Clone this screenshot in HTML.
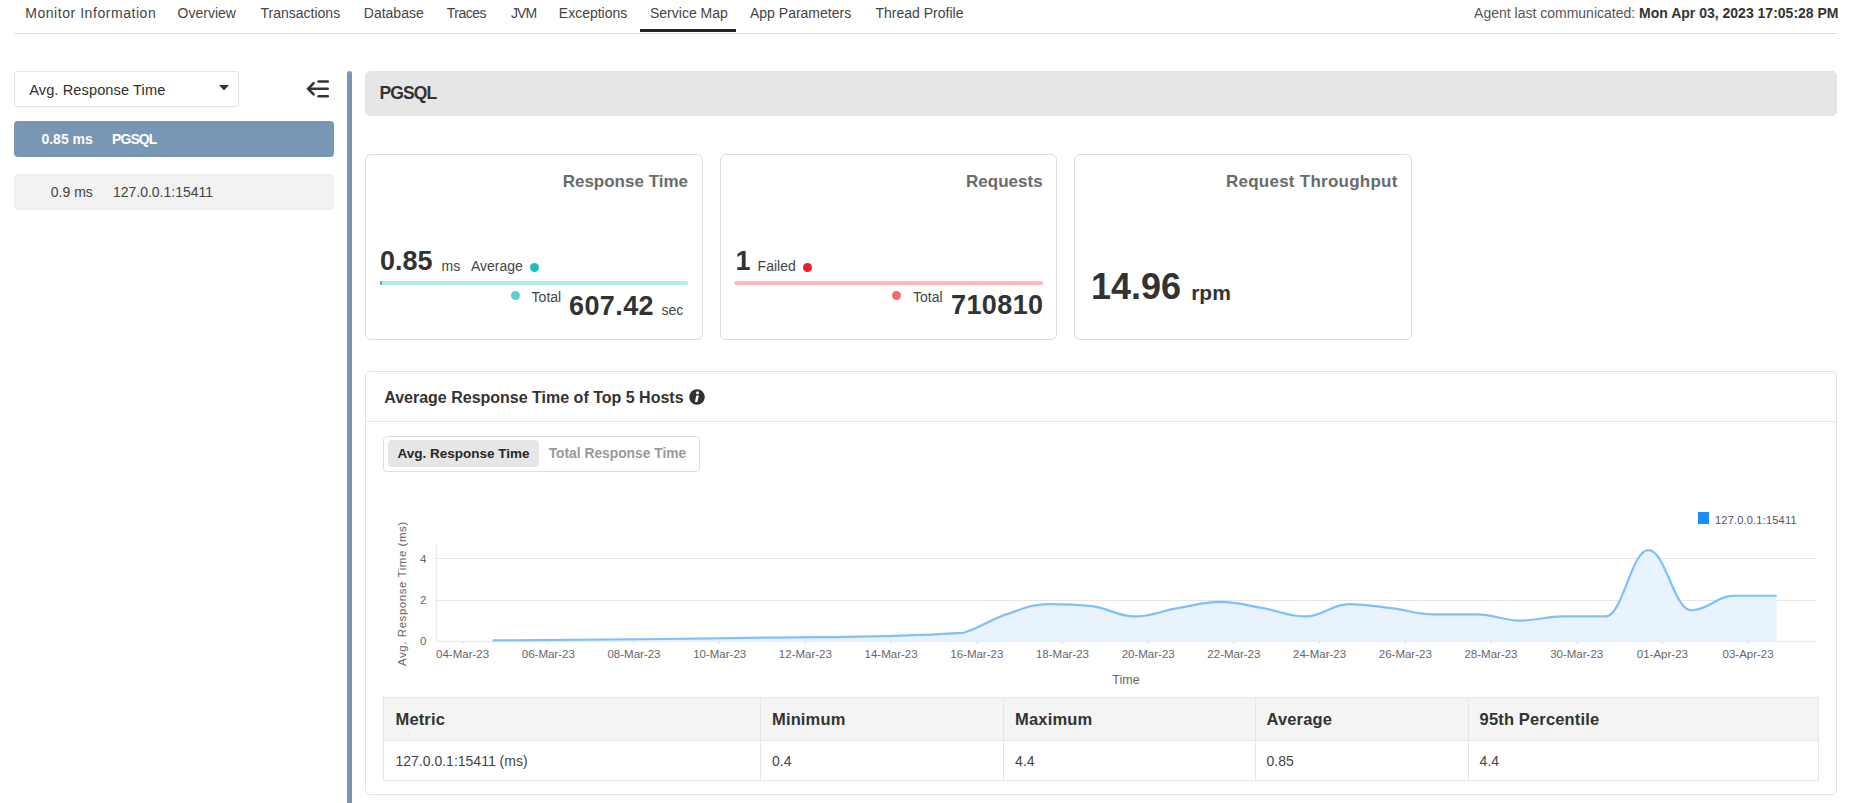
<!DOCTYPE html>
<html><head><meta charset="utf-8"><title>Service Map</title>
<style>
html,body{margin:0;padding:0;width:1852px;height:803px;overflow:hidden;background:#fff;position:relative}
body{font-family:"Liberation Sans",sans-serif}
.t{position:absolute;white-space:nowrap;line-height:1;font-family:"Liberation Sans",sans-serif}
.box{position:absolute;box-sizing:content-box}
svg text{font-family:"Liberation Sans",sans-serif}
</style></head><body>
<div class="t" style="left:25.2px;top:6.15px;font-size:14px;color:#444;letter-spacing:0.55px;">Monitor Information</div>
<div class="t" style="left:177.6px;top:6.15px;font-size:14px;color:#444;">Overview</div>
<div class="t" style="left:260.5px;top:6.15px;font-size:14px;color:#444;">Transactions</div>
<div class="t" style="left:363.8px;top:6.15px;font-size:14px;color:#444;">Database</div>
<div class="t" style="left:446.7px;top:6.15px;font-size:14px;color:#444;letter-spacing:-0.5px;">Traces</div>
<div class="t" style="left:511px;top:6.15px;font-size:14px;color:#444;letter-spacing:-0.9px;">JVM</div>
<div class="t" style="left:558.8px;top:6.15px;font-size:14px;color:#444;">Exceptions</div>
<div class="t" style="left:650px;top:6.15px;font-size:14px;color:#444;">Service Map</div>
<div class="t" style="left:750px;top:6.15px;font-size:14px;color:#444;">App Parameters</div>
<div class="t" style="left:875.5px;top:6.15px;font-size:14px;color:#444;">Thread Profile</div>
<div class="box" style="left:14px;top:33px;width:1823px;height:1px;background:#dedede"></div>
<div class="box" style="left:640px;top:29px;width:96px;height:3px;background:#222"></div>
<div class="t" style="right:13.5px;top:6.45px;font-size:14px;color:#555;">Agent last communicated: <b style="color:#333">Mon Apr 03, 2023 17:05:28 PM</b></div>
<div class="box" style="left:14px;top:71px;width:223px;height:34px;border:1px solid #e3e3e3;border-radius:3px;background:#fff"></div>
<div class="t" style="left:29.2px;top:82.84px;font-size:14.6px;color:#2e2e2e;letter-spacing:0.1px;">Avg. Response Time</div>
<svg class="box" style="left:219px;top:84.8px" width="11" height="7"><path d="M0 0 L10 0 L5 5.6 Z" fill="#333"/></svg>
<svg class="box" style="left:304px;top:78px" width="28" height="22"><g stroke="#333" stroke-width="2.6" stroke-linecap="round" fill="none"><path d="M14.6 3.5 H23.7"/><path d="M4.5 10.8 H23.7"/><path d="M9.6 5.2 L4.2 10.8 L9.6 16.4"/><path d="M14.6 18.3 H23.7"/></g></svg>
<div class="box" style="left:14px;top:121px;width:320px;height:36px;background:#7897b5;border-radius:4px"></div>
<div class="t" style="right:1759.2px;top:131.95px;font-size:14px;font-weight:700;color:#fff;">0.85 ms</div>
<div class="t" style="left:112px;top:131.95px;font-size:14px;font-weight:700;color:#fff;letter-spacing:-0.9px;">PGSQL</div>
<div class="box" style="left:14px;top:174px;width:320px;height:36px;background:#f2f2f2;border-radius:4px"></div>
<div class="t" style="right:1759.2px;top:184.85px;font-size:14px;color:#444;">0.9 ms</div>
<div class="t" style="left:112.9px;top:184.85px;font-size:14px;color:#444;">127.0.0.1:15411</div>
<div class="box" style="left:347px;top:71px;width:5px;height:740px;background:#7897b5;border-radius:3px"></div>
<div class="box" style="left:365px;top:71px;width:1470px;height:43px;background:#e6e6e6;border:1px solid #e2e2e2;border-radius:5px"></div>
<div class="t" style="left:379.5px;top:85.39px;font-size:17.5px;font-weight:700;color:#333;letter-spacing:-0.9px;">PGSQL</div>
<div class="box" style="left:365px;top:154px;width:336px;height:184px;border:1px solid #dcdcdc;border-radius:6px"></div>
<div class="box" style="left:720px;top:154px;width:335px;height:184px;border:1px solid #dcdcdc;border-radius:6px"></div>
<div class="box" style="left:1074px;top:154px;width:336px;height:184px;border:1px solid #dcdcdc;border-radius:6px"></div>
<div class="t" style="right:1164px;top:172.61px;font-size:17px;font-weight:700;color:#6b6b6b;">Response Time</div>
<div class="t" style="right:809.4000000000001px;top:172.61px;font-size:17px;font-weight:700;color:#6b6b6b;">Requests</div>
<div class="t" style="right:454.4000000000001px;top:172.61px;font-size:17px;font-weight:700;color:#6b6b6b;letter-spacing:0.25px;">Request Throughput</div>
<div class="t" style="left:380px;top:248.44px;font-size:27px;font-weight:700;color:#333;">0.85</div>
<div class="t" style="left:441.6px;top:259.25px;font-size:14px;color:#444;">ms</div>
<div class="t" style="left:470.9px;top:259.25px;font-size:14px;color:#444;">Average</div>
<div class="box" style="left:530px;top:263px;width:9px;height:9px;border-radius:50%;background:#17bfc1"></div>
<div class="box" style="left:380px;top:281px;width:308px;height:4px;border-radius:2px;background:#b3ebeb"></div>
<div class="box" style="left:380px;top:281px;width:1.5px;height:4px;border-radius:1px;background:#17bfc1"></div>
<div class="box" style="left:511px;top:291px;width:9px;height:9px;border-radius:50%;background:#5bcfd5"></div>
<div class="t" style="left:531.6px;top:290.05px;font-size:14px;color:#444;">Total</div>
<div class="t" style="left:569px;top:292.64px;font-size:27px;font-weight:700;color:#333;letter-spacing:0.4px;">607.42</div>
<div class="t" style="left:661.5px;top:302.85px;font-size:14px;color:#444;">sec</div>
<div class="t" style="left:735.5px;top:248.44px;font-size:27px;font-weight:700;color:#333;">1</div>
<div class="t" style="left:757.6px;top:259.25px;font-size:14px;color:#444;">Failed</div>
<div class="box" style="left:802.8px;top:262.6px;width:9px;height:9px;border-radius:50%;background:#ee1d27"></div>
<div class="box" style="left:734px;top:281px;width:309px;height:4px;border-radius:2px;background:#ffb8bc"></div>
<div class="box" style="left:892px;top:291.2px;width:9px;height:9px;border-radius:50%;background:#f26b73"></div>
<div class="t" style="left:913px;top:289.65px;font-size:14px;color:#444;">Total</div>
<div class="t" style="right:808.5px;top:292.44px;font-size:27px;font-weight:700;color:#333;letter-spacing:0.4px;">710810</div>
<div class="t" style="left:1091px;top:269.33px;font-size:36px;font-weight:700;color:#333;">14.96</div>
<div class="t" style="left:1191.2px;top:282.02px;font-size:21px;font-weight:700;color:#333;">rpm</div>
<div class="box" style="left:365px;top:371px;width:1470px;height:422px;border:1px solid #e3e3e3;border-radius:5px"></div>
<div class="t" style="left:384.2px;top:390.06px;font-size:16px;font-weight:700;color:#333;">Average Response Time of Top 5 Hosts</div>
<svg class="box" style="left:689px;top:389px" width="16" height="16"><circle cx="8" cy="8" r="7.8" fill="#333"/><circle cx="8.5" cy="3.7" r="1.5" fill="#fff"/><path d="M7.3 6.4 L9.9 6.4 L8.4 13 L5.9 13 Z" fill="#fff"/></svg>
<div class="box" style="left:366px;top:421px;width:1470px;height:1px;background:#e6e6e6"></div>
<div class="box" style="left:383px;top:436px;width:315px;height:34px;border:1px solid #dedede;border-radius:4px"></div>
<div class="box" style="left:388px;top:440px;width:151px;height:27px;background:#e6e6e6;border-radius:4px"></div>
<div class="t" style="left:397.4px;top:446.57px;font-size:13.5px;font-weight:700;color:#262626;">Avg. Response Time</div>
<div class="t" style="left:548.7px;top:447.12px;font-size:13.8px;font-weight:700;color:#9a9a9a;">Total Response Time</div>
<svg class="box" style="left:0;top:0" width="1852" height="803"><rect x="436" y="558.0" width="1381" height="1" fill="#e6e6e6"/><rect x="436" y="600.0" width="1381" height="1" fill="#e6e6e6"/><rect x="436" y="640.8" width="1381" height="1" fill="#e6e6e6"/><rect x="435.8" y="545" width="1" height="96" fill="#e6e6e6"/><path d="M492.60 640.47 C492.60 640.47 646.70 639.57 749.44 637.90 C835.05 636.51 877.86 637.90 963.47 632.81 C980.60 627.73 989.16 620.14 1006.28 614.39 C1023.40 608.64 1031.96 604.04 1049.09 604.04 C1066.21 604.04 1074.77 604.04 1091.89 606.11 C1109.02 608.18 1117.58 616.46 1134.70 616.46 C1151.82 616.46 1160.38 611.08 1177.51 608.18 C1194.63 605.28 1203.19 601.97 1220.31 601.97 C1237.44 601.97 1246.00 605.28 1263.12 608.18 C1280.24 611.08 1288.80 616.46 1305.93 616.46 C1323.05 616.46 1331.61 604.04 1348.73 604.04 C1365.86 604.04 1374.42 606.11 1391.54 608.18 C1408.66 610.25 1417.22 614.39 1434.35 614.39 C1451.47 614.39 1460.03 614.39 1477.15 614.39 C1494.28 614.39 1502.84 620.60 1519.96 620.60 C1537.08 620.60 1545.64 616.46 1562.77 616.46 C1579.89 616.46 1588.45 616.46 1605.57 616.46 C1622.70 616.46 1631.26 550.22 1648.38 550.22 C1665.50 550.22 1674.06 610.25 1691.19 610.25 C1708.31 610.25 1716.87 595.76 1733.99 595.76 C1751.12 595.76 1776.80 595.76 1776.80 595.76 L1776.80 641.30 L492.60 641.30 Z" fill="#e8f3fe"/><path d="M492.60 640.47 C492.60 640.47 646.70 639.57 749.44 637.90 C835.05 636.51 877.86 637.90 963.47 632.81 C980.60 627.73 989.16 620.14 1006.28 614.39 C1023.40 608.64 1031.96 604.04 1049.09 604.04 C1066.21 604.04 1074.77 604.04 1091.89 606.11 C1109.02 608.18 1117.58 616.46 1134.70 616.46 C1151.82 616.46 1160.38 611.08 1177.51 608.18 C1194.63 605.28 1203.19 601.97 1220.31 601.97 C1237.44 601.97 1246.00 605.28 1263.12 608.18 C1280.24 611.08 1288.80 616.46 1305.93 616.46 C1323.05 616.46 1331.61 604.04 1348.73 604.04 C1365.86 604.04 1374.42 606.11 1391.54 608.18 C1408.66 610.25 1417.22 614.39 1434.35 614.39 C1451.47 614.39 1460.03 614.39 1477.15 614.39 C1494.28 614.39 1502.84 620.60 1519.96 620.60 C1537.08 620.60 1545.64 616.46 1562.77 616.46 C1579.89 616.46 1588.45 616.46 1605.57 616.46 C1622.70 616.46 1631.26 550.22 1648.38 550.22 C1665.50 550.22 1674.06 610.25 1691.19 610.25 C1708.31 610.25 1716.87 595.76 1733.99 595.76 C1751.12 595.76 1776.80 595.76 1776.80 595.76" fill="none" stroke="#80c0fa" stroke-width="2.2"/><rect x="462.10" y="641" width="1" height="3" fill="#e0e0e0"/><text x="462.60" y="657.8" text-anchor="middle" font-size="11.5" fill="#666">04-Mar-23</text><rect x="547.80" y="641" width="1" height="3" fill="#e0e0e0"/><text x="548.30" y="657.8" text-anchor="middle" font-size="11.5" fill="#666">06-Mar-23</text><rect x="633.50" y="641" width="1" height="3" fill="#e0e0e0"/><text x="634.00" y="657.8" text-anchor="middle" font-size="11.5" fill="#666">08-Mar-23</text><rect x="719.20" y="641" width="1" height="3" fill="#e0e0e0"/><text x="719.70" y="657.8" text-anchor="middle" font-size="11.5" fill="#666">10-Mar-23</text><rect x="804.90" y="641" width="1" height="3" fill="#e0e0e0"/><text x="805.40" y="657.8" text-anchor="middle" font-size="11.5" fill="#666">12-Mar-23</text><rect x="890.60" y="641" width="1" height="3" fill="#e0e0e0"/><text x="891.10" y="657.8" text-anchor="middle" font-size="11.5" fill="#666">14-Mar-23</text><rect x="976.30" y="641" width="1" height="3" fill="#e0e0e0"/><text x="976.80" y="657.8" text-anchor="middle" font-size="11.5" fill="#666">16-Mar-23</text><rect x="1062.00" y="641" width="1" height="3" fill="#e0e0e0"/><text x="1062.50" y="657.8" text-anchor="middle" font-size="11.5" fill="#666">18-Mar-23</text><rect x="1147.70" y="641" width="1" height="3" fill="#e0e0e0"/><text x="1148.20" y="657.8" text-anchor="middle" font-size="11.5" fill="#666">20-Mar-23</text><rect x="1233.40" y="641" width="1" height="3" fill="#e0e0e0"/><text x="1233.90" y="657.8" text-anchor="middle" font-size="11.5" fill="#666">22-Mar-23</text><rect x="1319.10" y="641" width="1" height="3" fill="#e0e0e0"/><text x="1319.60" y="657.8" text-anchor="middle" font-size="11.5" fill="#666">24-Mar-23</text><rect x="1404.80" y="641" width="1" height="3" fill="#e0e0e0"/><text x="1405.30" y="657.8" text-anchor="middle" font-size="11.5" fill="#666">26-Mar-23</text><rect x="1490.50" y="641" width="1" height="3" fill="#e0e0e0"/><text x="1491.00" y="657.8" text-anchor="middle" font-size="11.5" fill="#666">28-Mar-23</text><rect x="1576.20" y="641" width="1" height="3" fill="#e0e0e0"/><text x="1576.70" y="657.8" text-anchor="middle" font-size="11.5" fill="#666">30-Mar-23</text><rect x="1661.90" y="641" width="1" height="3" fill="#e0e0e0"/><text x="1662.40" y="657.8" text-anchor="middle" font-size="11.5" fill="#666">01-Apr-23</text><rect x="1747.60" y="641" width="1" height="3" fill="#e0e0e0"/><text x="1748.10" y="657.8" text-anchor="middle" font-size="11.5" fill="#666">03-Apr-23</text><text x="426.5" y="645" text-anchor="end" font-size="11.5" fill="#666">0</text><text x="426.5" y="604" text-anchor="end" font-size="11.5" fill="#666">2</text><text x="426.5" y="562.5" text-anchor="end" font-size="11.5" fill="#666">4</text><text transform="translate(406,593.6) rotate(-90)" text-anchor="middle" font-size="11.5" fill="#666" letter-spacing="0.55">Avg. Response Time (ms)</text><text x="1126" y="684" text-anchor="middle" font-size="12.5" fill="#666">Time</text><rect x="1698" y="512" width="11" height="12" fill="#1a8cff"/><text x="1715" y="524" font-size="11" fill="#555" letter-spacing="0.2">127.0.0.1:15411</text></svg>
<div class="box" style="left:383px;top:697px;width:1435px;height:43px;background:#f4f4f4"></div>
<div class="box" style="left:383px;top:697px;width:1434px;height:82px;border:1px solid #e6e6e6"></div>
<div class="box" style="left:384px;top:740px;width:1434px;height:1px;background:#e6e6e6"></div>
<div class="box" style="left:760px;top:697px;width:1px;height:83px;background:#e6e6e6"></div>
<div class="box" style="left:1003px;top:697px;width:1px;height:83px;background:#e6e6e6"></div>
<div class="box" style="left:1255px;top:697px;width:1px;height:83px;background:#e6e6e6"></div>
<div class="box" style="left:1468px;top:697px;width:1px;height:83px;background:#e6e6e6"></div>
<div class="t" style="left:395.5px;top:711.33px;font-size:16.5px;font-weight:700;color:#333;letter-spacing:0.15px;">Metric</div>
<div class="t" style="left:395.5px;top:754.45px;font-size:14px;color:#444;">127.0.0.1:15411 (ms)</div>
<div class="t" style="left:772px;top:711.33px;font-size:16.5px;font-weight:700;color:#333;letter-spacing:0.15px;">Minimum</div>
<div class="t" style="left:772px;top:754.45px;font-size:14px;color:#444;">0.4</div>
<div class="t" style="left:1015.1px;top:711.33px;font-size:16.5px;font-weight:700;color:#333;letter-spacing:0.15px;">Maximum</div>
<div class="t" style="left:1015.1px;top:754.45px;font-size:14px;color:#444;">4.4</div>
<div class="t" style="left:1266.5px;top:711.33px;font-size:16.5px;font-weight:700;color:#333;letter-spacing:0.15px;">Average</div>
<div class="t" style="left:1266.5px;top:754.45px;font-size:14px;color:#444;">0.85</div>
<div class="t" style="left:1479.6px;top:711.33px;font-size:16.5px;font-weight:700;color:#333;letter-spacing:0.15px;">95th Percentile</div>
<div class="t" style="left:1479.6px;top:754.45px;font-size:14px;color:#444;">4.4</div>
</body></html>
